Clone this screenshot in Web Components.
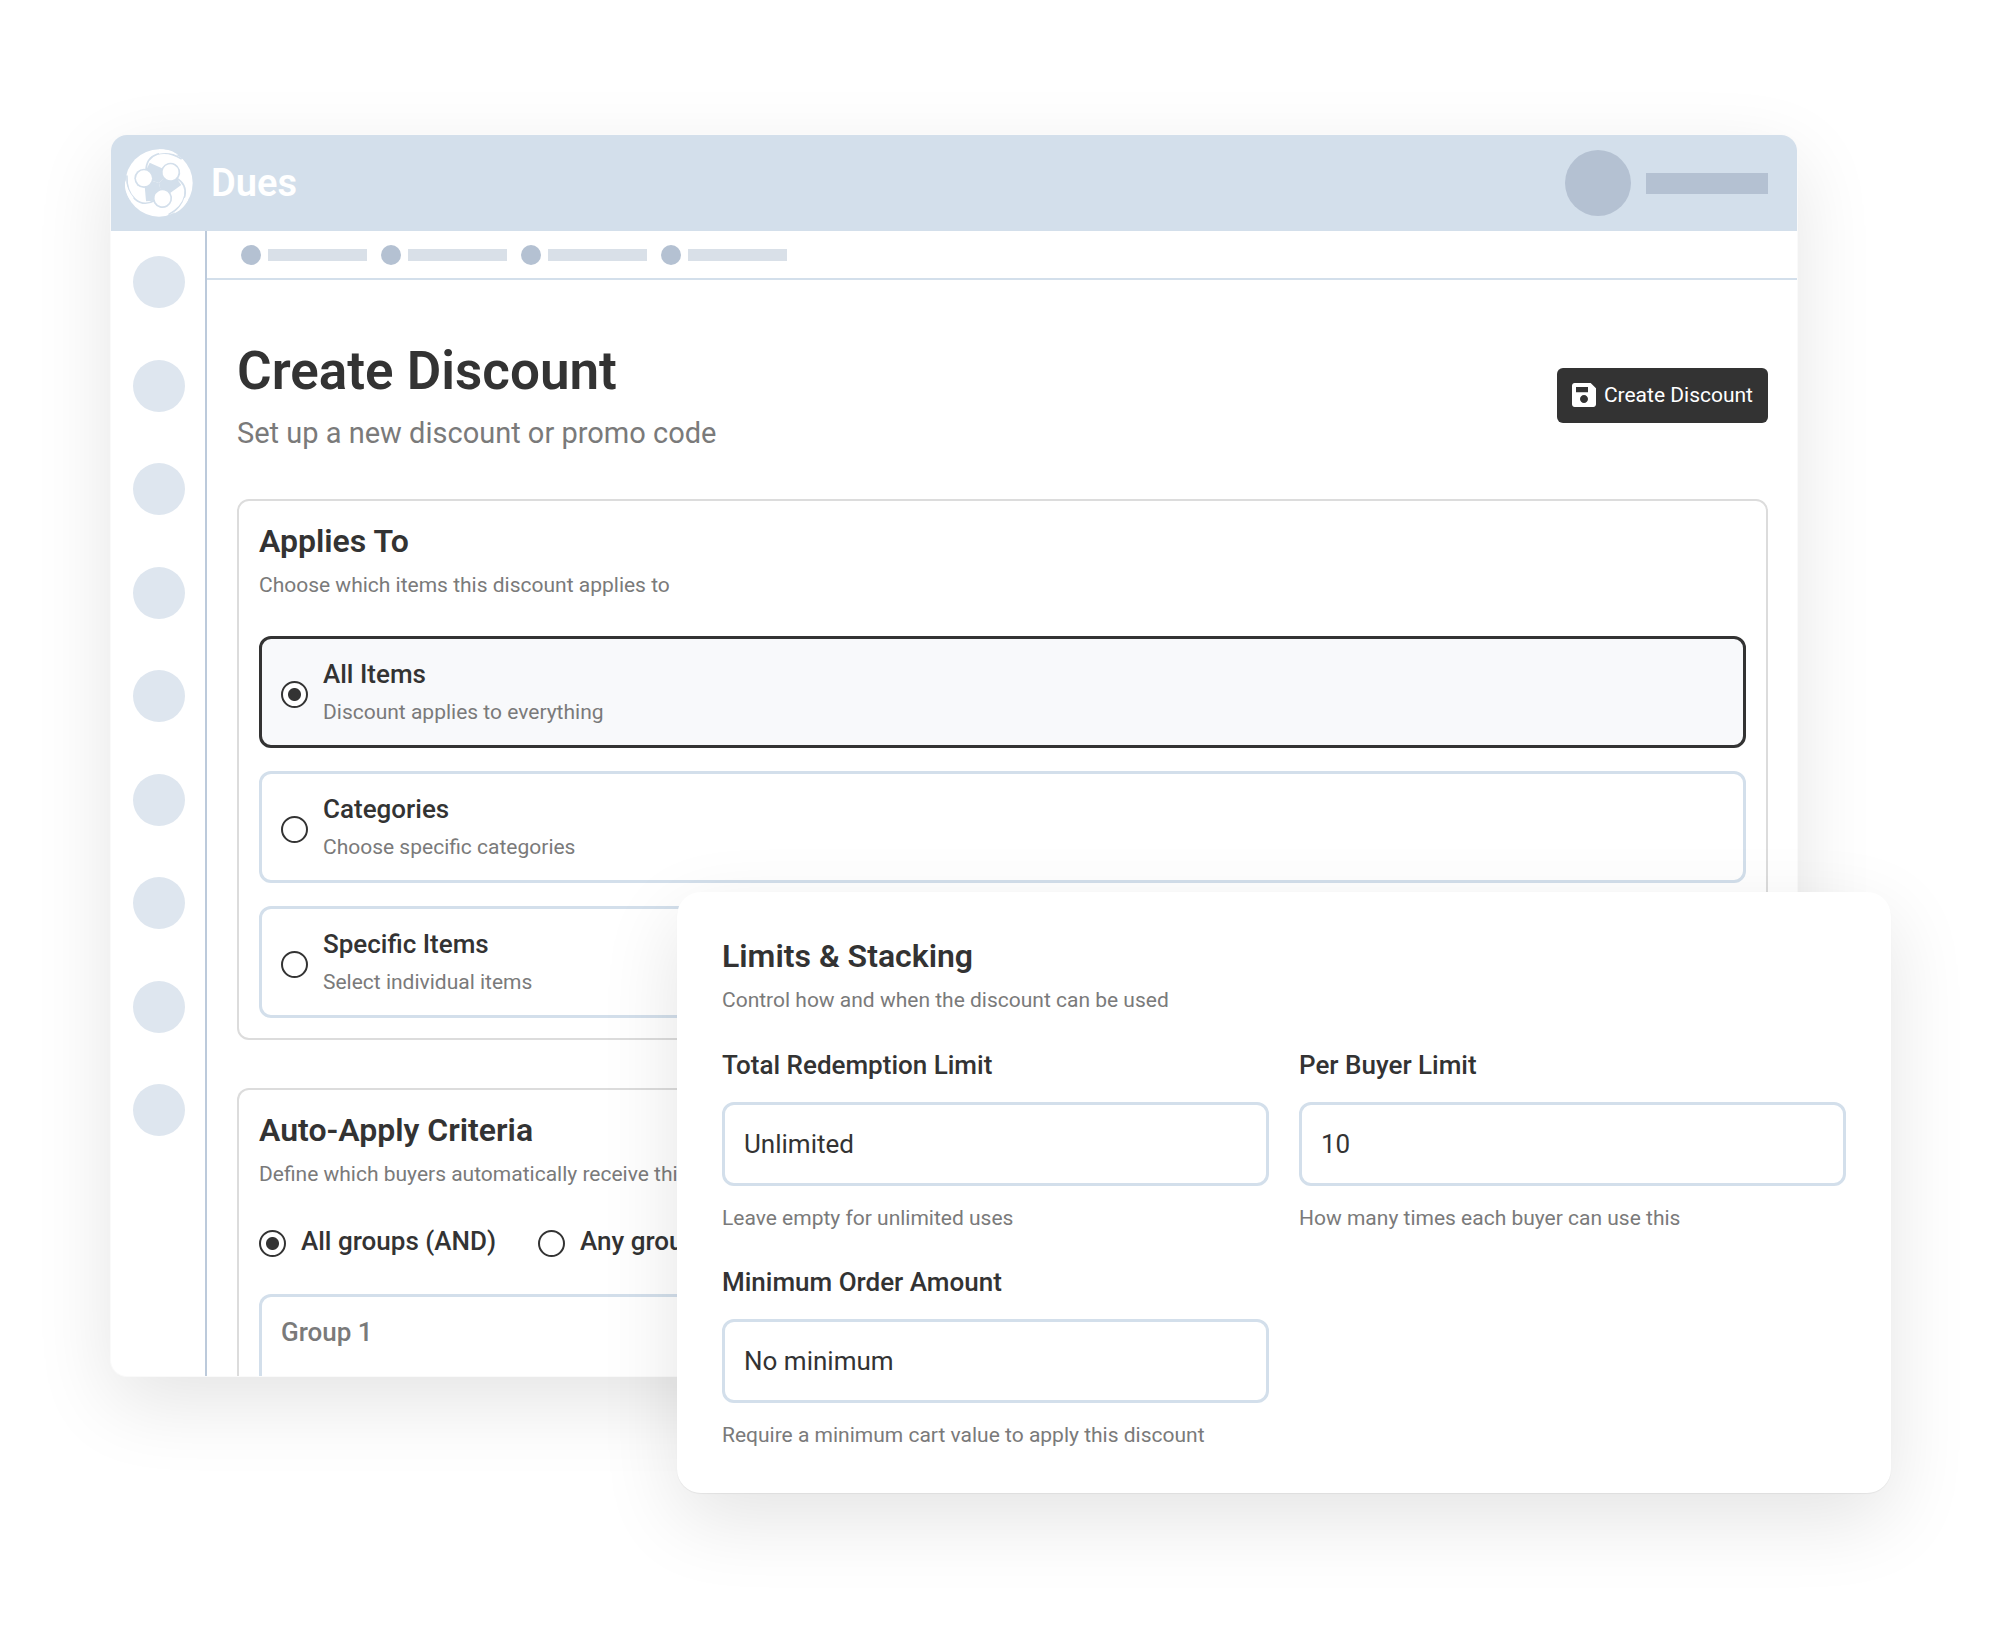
<!DOCTYPE html>
<html lang="en">
<head>
<meta charset="utf-8">
<meta name="viewport" content="width=device-width, initial-scale=1">
<title>Create Discount</title>
<style>
  body {
    margin: 0;
    background: #fff;
    color: #333;
    font-family: Roboto, "Liberation Sans", sans-serif;
    --line: #d3dfeb;
    --mute: #b4c1d2;
    --soft: #7a7a7a;
  }
</style>
</head>
<body>
<dues-stage>
  <app-window>
    <app-brand slot="header">Dues</app-brand>
    <page-head>
      Create Discount
      <span slot="sub">Set up a new discount or promo code</span>
      <save-button slot="action">Create Discount</save-button>
    </page-head>
    <form-card>
      <card-title sub="Choose which items this discount applies to">Applies To</card-title>
      <radio-set>
        <radio-option boxed checked hint="Discount applies to everything">All Items</radio-option>
        <radio-option boxed hint="Choose specific categories">Categories</radio-option>
        <radio-option boxed hint="Select individual items">Specific Items</radio-option>
      </radio-set>
    </form-card>
    <form-card open>
      <card-title sub="Define which buyers automatically receive this discount">Auto-Apply Criteria</card-title>
      <radio-set inline>
        <radio-option checked>All groups (AND)</radio-option>
        <radio-option>Any group (OR)</radio-option>
      </radio-set>
      <group-box>Group 1</group-box>
    </form-card>
  </app-window>
  <float-panel slot="over">
    <card-title slot="title" sub="Control how and when the discount can be used">Limits &amp; Stacking</card-title>
    <text-field value="Unlimited" hint="Leave empty for unlimited uses">Total Redemption Limit</text-field>
    <text-field value="10" hint="How many times each buyer can use this">Per Buyer Limit</text-field>
    <text-field value="No minimum" hint="Require a minimum cart value to apply this discount">Minimum Order Amount</text-field>
  </float-panel>
</dues-stage>

<script>
(function () {
  'use strict';

  // registers an element whose shadow root is cloned from a template
  function define(name, html, setup) {
    const t = document.createElement('template');
    t.innerHTML = html;
    customElements.define(name, class extends HTMLElement {
      constructor() {
        super();
        this.attachShadow({ mode: 'open' }).appendChild(t.content.cloneNode(true));
      }
      connectedCallback() {
        if (setup && !this.ready) {
          this.ready = true;
          setup(this, this.shadowRoot);
        }
      }
    });
  }

  define('dues-stage', `
    <style>
      :host { display: block; position: relative; box-sizing: border-box; min-height: 100vh; padding: 135px 203px 250px 111px; }
      .over { position: absolute; top: 892px; left: 677px; right: 109px; }
    </style>
    <slot></slot>
    <div class="over"><slot name="over"></slot></div>
  `);

  define('app-window', `
    <style>
      :host { display: block; overflow: hidden; border-radius: 16px; background: #fff; box-shadow: 0 0 0 1px #fafafa, 0 26px 80px rgba(0, 0, 0, .11); }
      header { display: flex; align-items: center; justify-content: space-between; height: 96px; padding: 0 29px 0 14px; background: var(--line); }
      .user { display: flex; align-items: center; gap: 15px; }
      .user i { width: 66px; height: 66px; border-radius: 50%; background: var(--mute); }
      .user b { width: 122px; height: 21px; background: var(--mute); }
      .body { display: flex; }
      nav { display: flex; flex-direction: column; justify-content: space-between; padding: 25px 20px 240px 22px; border-right: 2px solid #bccadb; }
      nav i { width: 52px; height: 52px; border-radius: 50%; background: #dee6ef; }
      .main { flex: 1; min-width: 0; }
      .crumbs { display: flex; align-items: center; gap: 14px; height: 47px; padding-left: 34px; border-bottom: 2px solid var(--line); }
      .crumbs span { display: flex; align-items: center; gap: 7px; }
      .crumbs i { width: 20px; height: 20px; border-radius: 50%; background: var(--mute); }
      .crumbs b { width: 99px; height: 12px; background: #d9e0e8; }
      .content { display: flex; flex-direction: column; gap: 48px; padding: 59px 29px 0 30px; }
    </style>
    <header>
      <slot name="header"></slot>
      <div class="user"><i></i><b></b></div>
    </header>
    <div class="body">
      <nav><i></i><i></i><i></i><i></i><i></i><i></i><i></i><i></i><i></i></nav>
      <div class="main">
        <div class="crumbs">
          <span><i></i><b></b></span><span><i></i><b></b></span><span><i></i><b></b></span><span><i></i><b></b></span>
        </div>
        <div class="content"><slot></slot></div>
      </div>
    </div>
  `);

  // three people in a ring: one third is drawn, then turned twice
  define('app-brand', `
    <style>
      :host { display: flex; align-items: center; gap: 18px; color: #fff; font-size: 38px; line-height: 48px; font-weight: 600; }
      svg { display: block; width: 68px; height: 68px; }
      .cut { fill: var(--line); }
      .gap { fill: none; stroke: var(--line); stroke-width: 5; }
    </style>
    <svg viewBox="-102 -102 204 204" aria-hidden="true">
      <defs>
        <g id="third">
          <path class="cut" d="M0 0L-45-14L-38-40L-28-61L9-44L35-32Z"/>
          <path class="cut" d="M52-84C62-80 74-72 84-60L90-76L64-96Z"/>
          <path class="gap" d="M-39-36C-39-88 14-106 68-72"/>
          <circle class="cut" cx="-45" cy="-14" r="29"/>
        </g>
      </defs>
      <circle r="101" fill="#fff"/>
      <use href="#third"/>
      <use href="#third" transform="rotate(120)"/>
      <use href="#third" transform="rotate(240)"/>
      <g fill="#fff">
        <path id="tip" d="M0-101C24-102 44-96 58-83C40-90 20-92 0-88Z"/>
        <use href="#tip" transform="rotate(120)"/>
        <use href="#tip" transform="rotate(240)"/>
        <circle cx="-45" cy="-14" r="24"/>
        <circle cx="-45" cy="-14" r="24" transform="rotate(120)"/>
        <circle cx="-45" cy="-14" r="24" transform="rotate(240)"/>
      </g>
    </svg>
    <span><slot></slot></span>
  `);

  define('page-head', `
    <style>
      :host { display: flex; align-items: center; justify-content: space-between; }
      h1 { margin: 0 0 12px; font-size: 53px; line-height: 64px; font-weight: 600; }
      p { margin: 0; font-size: 29px; line-height: 36px; color: var(--soft); }
    </style>
    <div>
      <h1><slot></slot></h1>
      <p><slot name="sub"></slot></p>
    </div>
    <slot name="action"></slot>
  `);

  define('save-button', `
    <style>
      :host { display: block; }
      button { display: flex; align-items: center; gap: 8px; height: 55px; padding: 0 15px; border: 0; border-radius: 6px; background: #333; color: #fff; font: 21px/28px Roboto, "Liberation Sans", sans-serif; cursor: pointer; }
      svg { width: 24px; height: 24px; }
    </style>
    <button type="button">
      <svg viewBox="3 3 18 18" aria-hidden="true"><path fill="#fff" d="M17 3H5c-1.11 0-2 .9-2 2v14c0 1.1.89 2 2 2h14c1.1 0 2-.9 2-2V7l-4-4zm-5 15c-1.66 0-3-1.34-3-3s1.34-3 3-3 3 1.34 3 3-1.34 3-3 3zm3-8H6V6h9v4z"/></svg>
      <slot></slot>
    </button>
  `);

  define('form-card', `
    <style>
      :host { display: block; padding: 20px; border: 2px solid #dcdcdc; border-radius: 12px; }
      :host([open]) { padding-bottom: 0; border-bottom: 0; border-radius: 12px 12px 0 0; }
    </style>
    <slot></slot>
  `);

  define('card-title', `
    <style>
      :host { display: block; }
      h2 { margin: 0 0 10px; font-size: 32px; line-height: 40px; font-weight: 600; }
      p { margin: 0; font-size: 21px; line-height: 28px; color: var(--soft); }
    </style>
    <h2><slot></slot></h2>
    <p></p>
  `, (el, root) => {
    root.querySelector('p').textContent = el.getAttribute('sub');
  });

  define('radio-set', `
    <style>
      :host { display: flex; flex-direction: column; gap: 23px; margin-top: 37px; }
      :host([inline]) { flex-direction: row; gap: 42px; }
    </style>
    <slot></slot>
  `, (el) => {
    // radios in separate shadow roots do not group by name, so clear the others here
    el.addEventListener('pick', (e) => {
      el.querySelectorAll('radio-option').forEach((o) => {
        o.toggleAttribute('checked', o === e.target);
        o.shadowRoot.querySelector('input').checked = o === e.target;
      });
    });
  });

  define('radio-option', `
    <style>
      :host { display: block; }
      label { display: flex; align-items: center; gap: 15px; cursor: pointer; }
      :host([boxed]) label { padding: 19px; border: 3px solid var(--line); border-radius: 12px; }
      :host([boxed][checked]) label { border-color: #333; background: #f8f9fb; }
      input { appearance: none; flex: none; box-sizing: border-box; width: 27px; height: 27px; margin: 4px 0 0; border: 2px solid #333; border-radius: 50%; background: #fff; }
      input:checked { background: radial-gradient(circle, #333 6px, #fff 7px); }
      .text { display: flex; flex-direction: column; gap: 8px; }
      b { font-size: 26px; line-height: 32px; font-weight: 500; }
      small { font-size: 21px; line-height: 28px; color: var(--soft); }
    </style>
    <label>
      <input type="radio">
      <span class="text"><b><slot></slot></b></span>
    </label>
  `, (el, root) => {
    const input = root.querySelector('input');
    input.checked = el.hasAttribute('checked');
    if (el.hasAttribute('hint')) {
      const s = document.createElement('small');
      s.textContent = el.getAttribute('hint');
      root.querySelector('.text').appendChild(s);
    }
    input.addEventListener('change', () => el.dispatchEvent(new CustomEvent('pick', { bubbles: true })));
  });

  define('group-box', `
    <style>
      :host { display: block; margin-top: 37px; padding: 19px 19px 28px; border: 3px solid var(--line); border-bottom: 0; border-radius: 12px 12px 0 0; color: var(--soft); font-size: 26px; line-height: 32px; font-weight: 500; }
    </style>
    <slot></slot>
  `);

  define('float-panel', `
    <style>
      :host { display: block; padding: 44px 45px; border-radius: 24px; background: #fff; box-shadow: 0 1px 1px rgba(0, 0, 0, .06), 0 26px 80px rgba(0, 0, 0, .11); }
      .grid { display: grid; grid-template-columns: 1fr 1fr; gap: 34px 30px; margin-top: 35px; }
    </style>
    <slot name="title"></slot>
    <div class="grid"><slot></slot></div>
  `);

  define('text-field', `
    <style>
      :host { display: block; }
      label { display: block; font-size: 26px; line-height: 32px; font-weight: 500; }
      input { display: block; box-sizing: border-box; width: 100%; height: 84px; margin: 21px 0 18px; padding: 0 19px; border: 3px solid var(--line); border-radius: 12px; background: #fff; color: #333; font: 26px/32px Roboto, "Liberation Sans", sans-serif; }
      p { margin: 0; font-size: 21px; line-height: 28px; color: var(--soft); }
    </style>
    <label for="field"><slot></slot></label>
    <input id="field" type="text" aria-describedby="hint">
    <p id="hint"></p>
  `, (el, root) => {
    root.querySelector('input').value = el.getAttribute('value');
    root.querySelector('p').textContent = el.getAttribute('hint');
  });
})();
</script>
</body>
</html>
